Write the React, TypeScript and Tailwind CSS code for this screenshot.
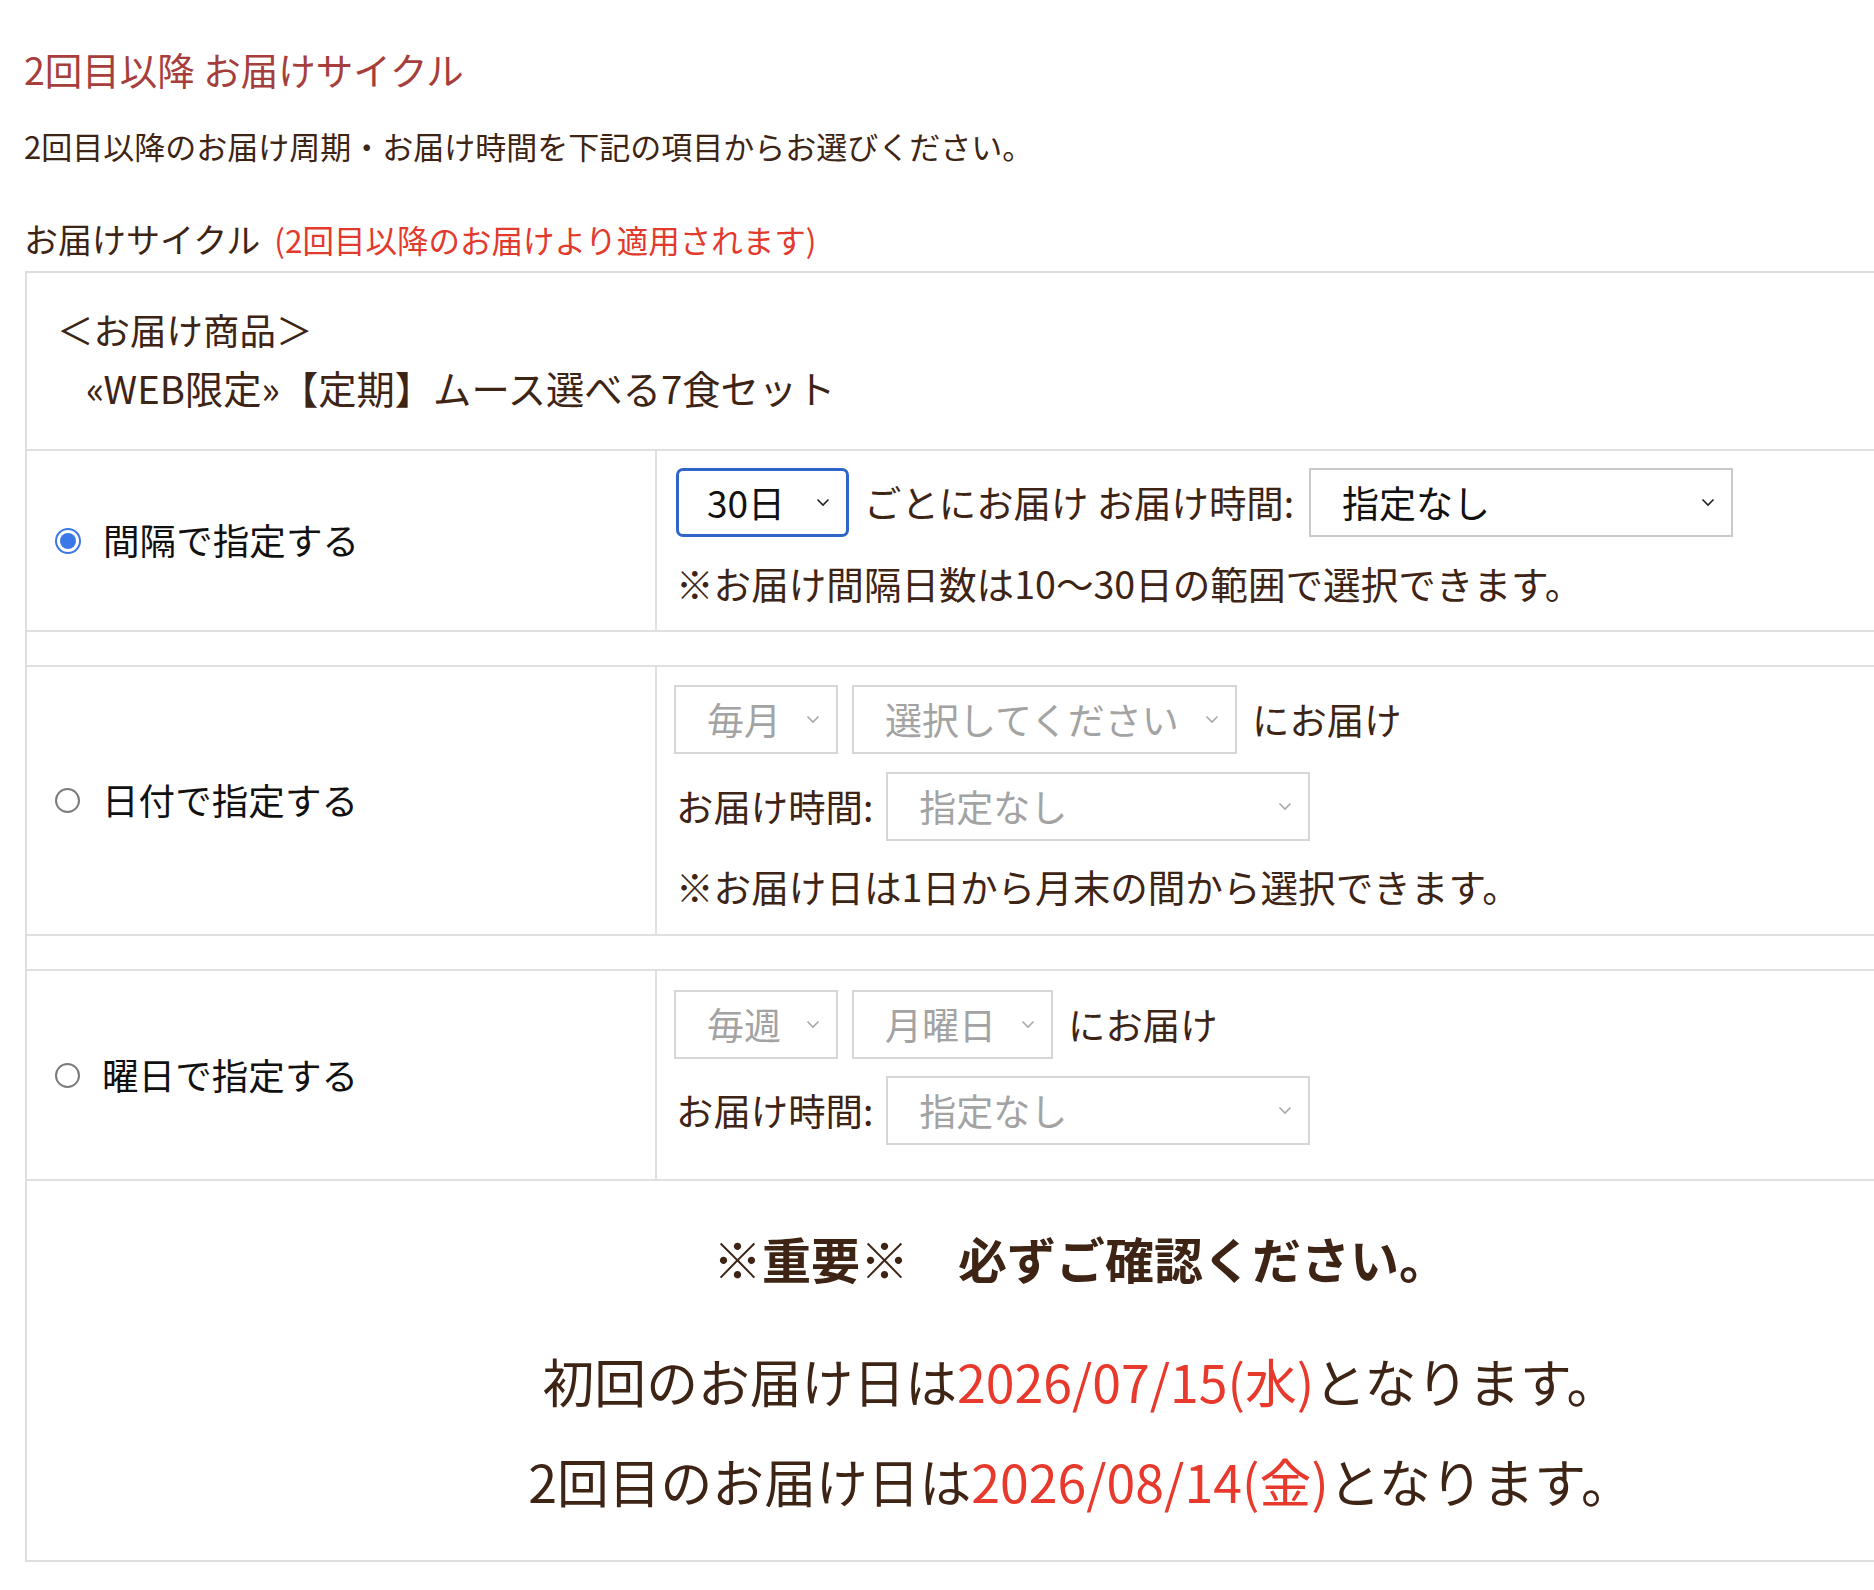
import React from 'react';

const font = "font-['Noto_Sans_CJK_JP','Noto_Sans',sans-serif]";

function Chevron({ disabled }: { disabled?: boolean }) {
  return (
    <svg width="14" height="9" viewBox="0 0 14 9" className="shrink-0">
      <polyline
        points="1.5,1.5 7,7 12.5,1.5"
        fill="none"
        stroke={disabled ? '#a8a8a8' : '#222'}
        strokeWidth="1.6"
      />
    </svg>
  );
}

interface FakeSelectProps {
  value: string;
  width: string;
  disabled?: boolean;
  focused?: boolean;
}

function FakeSelect({ value, width, disabled, focused }: FakeSelectProps) {
  const border = focused
    ? 'border-[3px] border-[#2f64c9] rounded-[7px] pl-[28px]'
    : disabled
      ? 'border-2 border-[#d6d6d6] pl-[31px]'
      : 'border-2 border-[#c9c9c9] pl-[31px]';
  return (
    <div
      className={`${width} h-[69px] ${border} pr-[16px] flex items-center justify-between bg-white shrink-0`}
    >
      <span className={`text-[37px] leading-none ${disabled ? 'text-[#a3a3a3]' : 'text-[#111]'}`}>{value}</span>
      <Chevron disabled={disabled} />
    </div>
  );
}

function Radio({ checked }: { checked?: boolean }) {
  if (checked) {
    return (
      <span className="w-[26px] h-[26px] rounded-full border-2 border-[#3b78e7] flex items-center justify-center shrink-0">
        <span className="w-[16px] h-[16px] rounded-full bg-[#3b78e7]" />
      </span>
    );
  }
  return <span className="w-[25px] h-[25px] rounded-full border-2 border-[#7a7a7a] shrink-0 bg-white" />;
}

function LeftCell({ label, checked }: { label: string; checked?: boolean }) {
  return (
    <div className="w-[630px] shrink-0 border-r-2 border-[#e0e0e0] flex items-center pl-[28px] gap-[22px]">
      <Radio checked={checked} />
      <span className="text-[36.6px] leading-none text-[#111]">{label}</span>
    </div>
  );
}

export default function App() {
  const brown = 'text-[#3e2414]';
  return (
    <div className={`w-full overflow-hidden bg-white ${font} ${brown} pb-[25px]`}>
      <div className="pl-6 pt-[42px]">
        <h2 className="text-[37.5px] leading-[54px] text-[#a63e3b] font-normal">2回目以降 お届けサイクル</h2>
        <p className="text-[31px] leading-[46px] mt-[27px]">
          2回目以降のお届け周期・お届け時間を下記の項目からお選びください。
        </p>
        <div className="flex items-baseline mt-[45px] h-[50px]">
          <span className="text-[34px] leading-[50px]">お届けサイクル</span>
          <span className="text-[31.5px] leading-[50px] text-[#e23a2d] ml-[14px]">(2回目以降のお届けより適用されます)</span>
        </div>
      </div>

      <div className="ml-[25px] mt-[7px] w-[2111px] border-2 border-[#dedede]">
        {/* product */}
        <div className="border-b-2 border-[#e0e0e0] pl-[30px] pt-[28px] pb-[32px]">
          <p className="text-[36.5px] leading-[58px]">＜お届け商品＞</p>
          <p className="text-[38.3px] leading-[58px] pl-[29px]">«WEB限定»【定期】ムース選べる7食セット</p>
        </div>

        {/* interval */}
        <div className="flex border-b-2 border-[#e0e0e0]">
          <LeftCell label="間隔で指定する" checked />
          <div className="flex-1 pl-[19px] pt-[17px] pb-[24px]">
            <div className="flex items-center gap-[15px]">
              <FakeSelect value="30日" width="w-[173px]" focused />
              <span className="text-[37.4px] leading-none">ごとにお届け お届け時間:</span>
              <FakeSelect value="指定なし" width="w-[424px]" />
            </div>
            <p className="text-[37.6px] leading-[46px] mt-[23px]">※お届け間隔日数は10〜30日の範囲で選択できます。</p>
          </div>
        </div>

        <div className="h-[35px] border-b-2 border-[#e0e0e0]" />

        {/* date */}
        <div className="flex border-b-2 border-[#e0e0e0]">
          <LeftCell label="日付で指定する" />
          <div className="flex-1 pl-[17px] pt-[18px] pb-[25px]">
            <div className="flex items-center gap-[14px]">
              <FakeSelect value="毎月" width="w-[164px]" disabled />
              <FakeSelect value="選択してください" width="w-[385px]" disabled />
              <span className="text-[37.4px] leading-none ml-[1px]">にお届け</span>
            </div>
            <div className="flex items-center gap-[13px] mt-[18px]">
              <span className="text-[37.4px] leading-none ml-[2px]">お届け時間:</span>
              <FakeSelect value="指定なし" width="w-[424px]" disabled />
            </div>
            <p className="text-[37.6px] leading-[46px] mt-[22px] pl-[2px]">※お届け日は1日から月末の間から選択できます。</p>
          </div>
        </div>

        <div className="h-[35px] border-b-2 border-[#e0e0e0]" />

        {/* weekday */}
        <div className="flex border-b-2 border-[#e0e0e0]">
          <LeftCell label="曜日で指定する" />
          <div className="flex-1 pl-[17px] pt-[19px] pb-[34px]">
            <div className="flex items-center gap-[14px]">
              <FakeSelect value="毎週" width="w-[164px]" disabled />
              <FakeSelect value="月曜日" width="w-[201px]" disabled />
              <span className="text-[37.4px] leading-none ml-[1px]">にお届け</span>
            </div>
            <div className="flex items-center gap-[13px] mt-[17px]">
              <span className="text-[37.4px] leading-none ml-[2px]">お届け時間:</span>
              <FakeSelect value="指定なし" width="w-[424px]" disabled />
            </div>
          </div>
        </div>

        {/* notice */}
        <div className="text-center pt-[44px] pb-[44px]">
          <p className="text-[49px] leading-[66px] font-bold">※重要※　必ずご確認ください。</p>
          <p className="text-[51.8px] leading-[70px] mt-[55px]">
            初回のお届け日は<span className="text-[#e8392d]">2026/07/15(水)</span>となります。
          </p>
          <p className="text-[51.8px] leading-[70px] mt-[30px]">
            2回目のお届け日は<span className="text-[#e8392d]">2026/08/14(金)</span>となります。
          </p>
        </div>
      </div>
    </div>
  );
}
